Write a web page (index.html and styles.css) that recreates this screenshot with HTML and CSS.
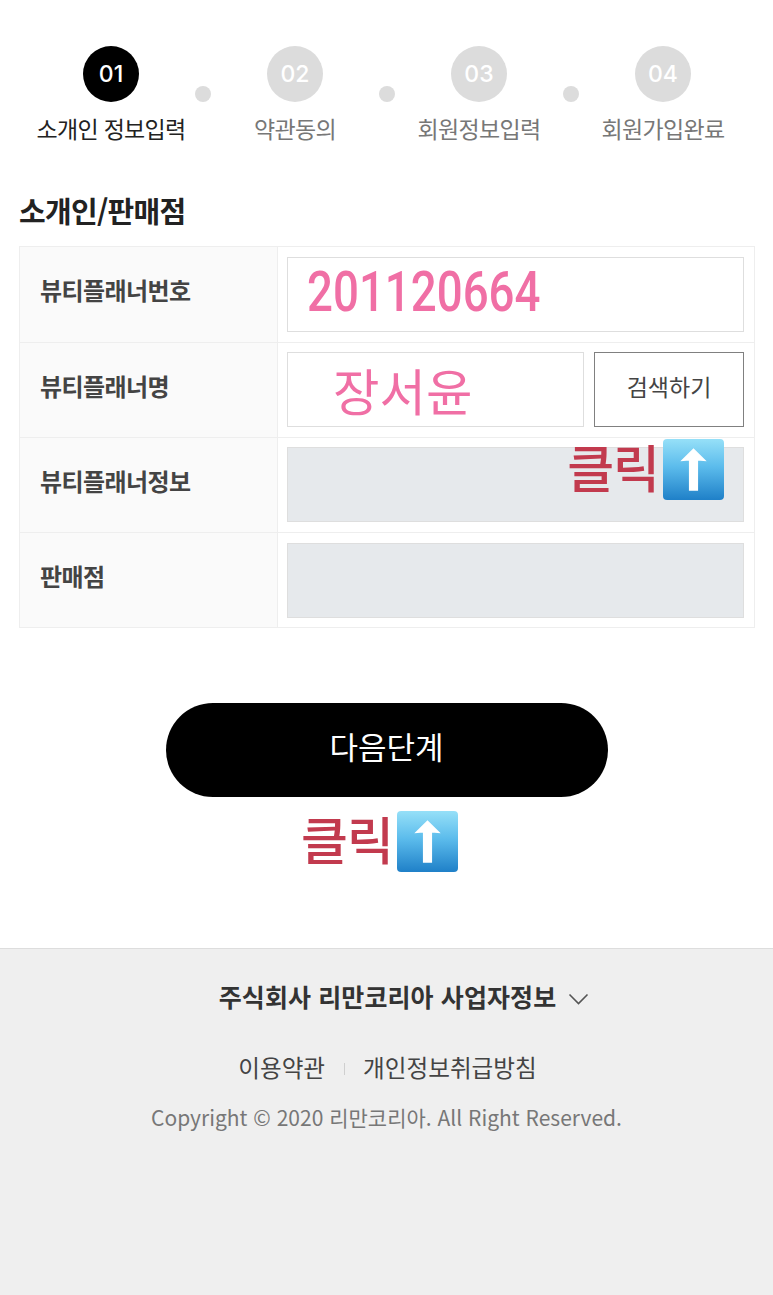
FILE: index.html
```html
<!DOCTYPE html>
<html lang="ko">
<head>
<meta charset="utf-8">
<title>소개인/판매점</title>
<link rel="stylesheet" href="styles.css">
</head>
<body>
<svg class="defs" width="0" height="0" aria-hidden="true">
  <defs>
    <linearGradient id="keycap" x1="0" y1="0" x2="0" y2="1">
      <stop offset="0" stop-color="#96e0f8"/>
      <stop offset="0.45" stop-color="#5cbcec"/>
      <stop offset="1" stop-color="#1f80c8"/>
    </linearGradient>
    <symbol id="up-key" viewBox="0 0 60 60">
      <rect x="0" y="0" width="60" height="60" rx="4" fill="url(#keycap)"/>
      <path d="M30 9 L43 22 Q38 21 34.5 21.5 L34.5 51 L25.5 51 L25.5 21.5 Q22 21 17 22 Z" fill="#fff"/>
    </symbol>
  </defs>
</svg>
<main class="content">
  <ol class="steps">
    <li class="step active"><span class="num">01</span><span class="step-label">소개인 정보입력</span></li>
    <li class="dot"></li>
    <li class="step"><span class="num">02</span><span class="step-label">약관동의</span></li>
    <li class="dot"></li>
    <li class="step"><span class="num">03</span><span class="step-label">회원정보입력</span></li>
    <li class="dot"></li>
    <li class="step"><span class="num">04</span><span class="step-label">회원가입완료</span></li>
  </ol>

  <h2 class="title">소개인/판매점</h2>

  <div class="form">
    <div class="row">
      <div class="label">뷰티플래너번호</div>
      <div class="cell"><div class="field number"><span class="digits">201120664</span></div></div>
    </div>
    <div class="row">
      <div class="label">뷰티플래너명</div>
      <div class="cell">
        <div class="field name">장서윤</div>
        <button class="search" type="button">검색하기</button>
      </div>
    </div>
    <div class="row">
      <div class="label">뷰티플래너정보</div>
      <div class="cell">
        <div class="field off"></div>
        <div class="click click-search"><span>클릭</span><svg class="key"><use href="#up-key"/></svg></div>
      </div>
    </div>
    <div class="row">
      <div class="label">판매점</div>
      <div class="cell"><div class="field off"></div></div>
    </div>
  </div>

  <div class="actions">
    <button class="next" type="button">다음단계</button>
    <div class="click click-next"><span>클릭</span><svg class="key"><use href="#up-key"/></svg></div>
  </div>
</main>

<footer class="footer">
  <div class="company">주식회사 리만코리아 사업자정보
    <svg class="chev" viewBox="0 0 20 12"><path d="M1 1.5 L10 10.5 L19 1.5" fill="none" stroke="#555" stroke-width="1.6"/></svg>
  </div>
  <div class="links"><span>이용약관</span><i class="sep"></i><span>개인정보취급방침</span></div>
  <div class="copy">Copyright © 2020 리만코리아. All Right Reserved.</div>
</footer>
</body>
</html>
```
FILE: styles.css
```css
* { box-sizing: border-box; }
html, body { margin: 0; padding: 0; }
body {
  width: 773px;
  height: 1295px;
  overflow: hidden;
  background: #fff;
  color: #222;
  font-family: "Noto Sans CJK KR", "Noto Sans", sans-serif;
  display: flex;
  flex-direction: column;
}
.defs { position: absolute; }
.content { padding: 46px 18px 0 19px; height: 948px; flex: none; }

.steps {
  list-style: none;
  margin: 0;
  padding: 0 0 0 8px;
  display: flex;
  align-items: flex-start;
}
.step {
  width: 168px;
  display: flex;
  flex-direction: column;
  align-items: center;
  color: #777;
}
.num {
  width: 56px;
  height: 56px;
  border-radius: 50%;
  background: #dcdcdc;
  color: #fff;
  font: 500 23px/56px "Inter", sans-serif;
  text-align: center;
}
.step-label {
  margin-top: 11px;
  font-size: 23px;
  line-height: 30px;
  letter-spacing: -0.7px;
  white-space: nowrap;
}
.step.active { color: #222; }
.step.active .num { background: #000; }
.dot {
  width: 16px;
  height: 16px;
  margin-top: 40px;
  border-radius: 50%;
  background: #dcdcdc;
}

.title {
  margin: 47px 0 0;
  font-size: 29px;
  line-height: 40px;
  font-weight: 700;
  letter-spacing: -0.7px;
  color: #222;
}

.form {
  margin-top: 16px;
  width: 736px;
  border: 1px solid #eeeeee;
}
.row {
  display: flex;
  height: 95px;
  border-bottom: 1px solid #eeeeee;
}
.row:first-child { height: 96px; }
.row:last-child { height: 94px; border-bottom: 0; }
.label {
  width: 258px;
  flex: none;
  background: #fafafa;
  border-right: 1px solid #eeeeee;
  padding: 0 0 10px 20px;
  display: flex;
  align-items: center;
  font-size: 24px;
  font-weight: 700;
  letter-spacing: -0.6px;
  color: #444;
}
.cell {
  flex: 1;
  position: relative;
  display: flex;
  align-items: center;
  gap: 10px;
  padding: 0 10px 0 9px;
}
.row:nth-child(2) .cell,
.row:nth-child(3) .cell { padding-bottom: 1px; }
.field {
  flex: 1;
  height: 75px;
  border: 1px solid #dedede;
  background: #fff;
  display: flex;
  align-items: center;
}
.field.off { background: #e6e9ec; }
.number {
  padding: 0 0 4px 19px;
  color: #f06fa5;
  font: 500 55px/1 "Roboto", sans-serif;
}
.digits {
  display: inline-block;
  transform: scaleX(0.83);
  transform-origin: left center;
}
.name {
  padding: 0 0 0 45px;
  color: #f06fa5;
  font-size: 50.5px;
  line-height: 1;
}
.search {
  width: 150px;
  height: 75px;
  flex: none;
  border: 1px solid #808080;
  background: #fff;
  color: #444;
  font: 400 23px "Noto Sans CJK KR", sans-serif;
  padding: 0 0 8px;
}

.click {
  display: flex;
  align-items: center;
  color: #c23a4e;
  font-size: 51px;
  line-height: 55px;
  font-weight: 500;
  letter-spacing: -1px;
}
.click span { display: block; padding-bottom: 6px; }
.key { width: 61px; height: 61px; flex: none; margin-left: 4px; }
.click-search {
  position: absolute;
  right: 30px;
  top: 1px;
}

.actions {
  display: flex;
  flex-direction: column;
  align-items: center;
  margin-top: 75px;
  padding-right: 1px;
}
.next {
  width: 442px;
  height: 94px;
  border: 0;
  border-radius: 47px;
  background: #000;
  color: #fff;
  font: 400 31px "Noto Sans CJK KR", sans-serif;
  padding: 0 0 10px;
}
.click-next { margin: 14px 14px 0 0; }

.footer {
  flex: 1;
  background: #efefef;
  border-top: 1px solid #dddddd;
  display: flex;
  flex-direction: column;
  align-items: center;
  padding-top: 29px;
}
.company {
  display: flex;
  align-items: center;
  margin-left: 35px;
  font-size: 25px;
  line-height: 36px;
  font-weight: 700;
  letter-spacing: 0.1px;
  color: #333;
}
.chev { width: 21px; height: 12px; margin: 6px 0 0 12px; }
.links {
  margin: 36px 0 0 2px;
  display: flex;
  align-items: center;
  font-size: 23.6px;
  line-height: 34px;
  color: #444;
}
.sep {
  width: 1px;
  height: 12px;
  margin: 4px 18px 0 19px;
  background: #cfcfcf;
}
.copy {
  margin-top: 17px;
  font-size: 21px;
  line-height: 32px;
  color: #777;
}
```
